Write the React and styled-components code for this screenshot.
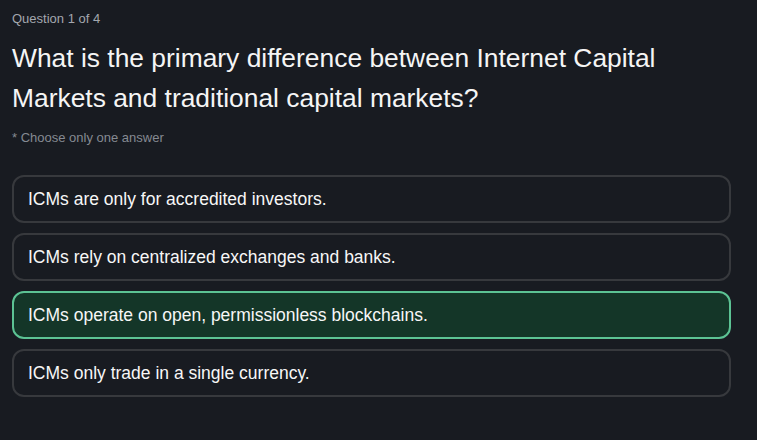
import React, { useState } from "react";
import styled, { createGlobalStyle } from "styled-components";

const Global = createGlobalStyle`
  html, body {
    margin: 0;
    padding: 0;
    background: #181b21;
  }
  body {
    font-family: "Liberation Sans", Arial, sans-serif;
    color: #f2f2f2;
  }
`;

const Page = styled.div`
  min-height: 440px;
  box-sizing: border-box;
  padding: 11px 26px 20px 12px;
  display: flex;
  flex-direction: column;
`;

const Counter = styled.div`
  font-size: 13px;
  line-height: 15px;
  color: #a3a7ae;
`;

const Title = styled.h1`
  margin: 12px 0 0;
  font-size: 26.4px;
  line-height: 40px;
  font-weight: 400;
  color: #f5f5f5;
`;

const Hint = styled.div`
  margin-top: 12px;
  font-size: 13px;
  line-height: 15px;
  color: #858a92;
`;

const Options = styled.div`
  margin-top: 30px;
  display: flex;
  flex-direction: column;
  gap: 10px;
`;

const Option = styled.button`
  display: block;
  width: 100%;
  box-sizing: border-box;
  text-align: left;
  padding: 12px 14px;
  border-radius: 12px;
  border: 2px solid ${(p) => (p.$selected ? "#5cc394" : "#37393d")};
  background: ${(p) => (p.$selected ? "#143628" : "#181b21")};
  color: #f7f7f7;
  font-family: "Liberation Sans", Arial, sans-serif;
  font-size: 17.5px;
  line-height: 20px;
  cursor: pointer;
`;

const answers = [
  "ICMs are only for accredited investors.",
  "ICMs rely on centralized exchanges and banks.",
  "ICMs operate on open, permissionless blockchains.",
  "ICMs only trade in a single currency.",
];

export default function App() {
  const [selected, setSelected] = useState(2);
  return (
    <>
      <Global />
      <Page>
        <Counter>Question 1 of 4</Counter>
        <Title>
          What is the primary difference between Internet Capital Markets and
          traditional capital markets?
        </Title>
        <Hint>* Choose only one answer</Hint>
        <Options>
          {answers.map((a, i) => (
            <Option key={i} $selected={selected === i} onClick={() => setSelected(i)}>
              {a}
            </Option>
          ))}
        </Options>
      </Page>
    </>
  );
}
